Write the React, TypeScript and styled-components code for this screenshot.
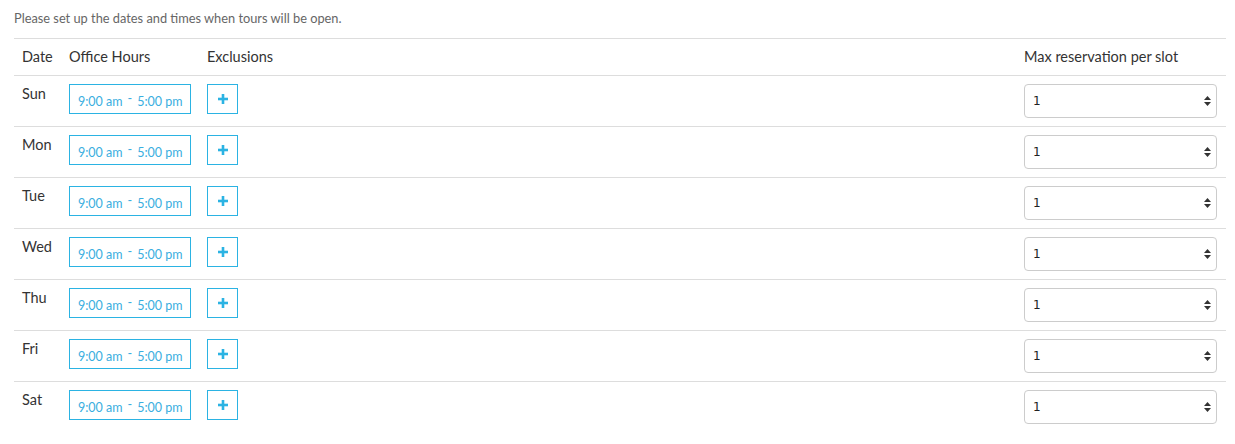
import React from "react";
import styled, { createGlobalStyle } from "styled-components";

const GlobalStyle = createGlobalStyle`
  body {
    margin: 0;
    background: #fff;
    font-family: "Lato", "Open Sans", sans-serif;
    color: #333;
  }
`;

const Page = styled.div`
  padding: 10px 9px 0 14px;
`;

const Intro = styled.p`
  margin: 0 0 12px;
  font-size: 12.8px;
  line-height: 16px;
  color: #666;
`;

const Table = styled.table`
  width: 100%;
  border-collapse: collapse;
  table-layout: fixed;
`;

const Head = styled.th<{ $w?: number }>`
  box-sizing: border-box;
  width: ${(p) => (p.$w ? `${p.$w}px` : "auto")};
  text-align: left;
  font-weight: 400;
  font-size: 14.5px;
  color: #333;
  padding: 8px 8px 8px;
  line-height: 20px;
  border-top: 1px solid #ddd;
`;

const Row = styled.tr`
  border-top: 1px solid #ddd;
  height: 51px;
`;

const Cell = styled.td`
  vertical-align: top;
  padding: 8px 8px 0;
  font-size: 14.5px;
  line-height: 20px;
`;

const DayLabel = styled.div`
  color: #333;
`;

const HoursBox = styled.div`
  box-sizing: border-box;
  width: 122px;
  height: 30px;
  border: 1px solid #2bb3e3;
  display: flex;
  align-items: flex-end;
  padding: 0 8px 3px;
  font-size: 12.5px;
  line-height: 16px;
  color: #3aaee0;
  white-space: nowrap;
`;

const Dash = styled.span`
  display: inline-block;
  margin: 0 5px;
  transform: translateY(-3px);
`;

const PlusButton = styled.button`
  box-sizing: border-box;
  width: 31px;
  height: 30px;
  border: 1px solid #2bb3e3;
  background: #fff;
  padding: 0;
  display: flex;
  align-items: center;
  justify-content: center;
  cursor: pointer;
`;

const SelectWrap = styled.div`
  position: relative;
  width: 193px;
`;

const Select = styled.select`
  box-sizing: border-box;
  width: 100%;
  height: 34px;
  appearance: none;
  -webkit-appearance: none;
  border: 1px solid #ccc;
  border-radius: 4px;
  background: #fff;
  padding: 0 8px;
  font-family: "DejaVu Sans", sans-serif;
  font-size: 12px;
  color: #222;
`;

const Arrows = styled.svg`
  position: absolute;
  right: 6px;
  top: 12px;
  pointer-events: none;
`;

const days = ["Sun", "Mon", "Tue", "Wed", "Thu", "Fri", "Sat"];

export default function App() {
  return (
    <>
      <GlobalStyle />
      <Page>
        <Intro>Please set up the dates and times when tours will be open.</Intro>
        <Table>
          <thead>
            <tr>
              <Head $w={47}>Date</Head>
              <Head $w={138}>Office Hours</Head>
              <Head>Exclusions</Head>
              <Head $w={210}>Max reservation per slot</Head>
            </tr>
          </thead>
          <tbody>
            {days.map((d) => (
              <Row key={d}>
                <Cell>
                  <DayLabel>{d}</DayLabel>
                </Cell>
                <Cell>
                  <HoursBox>
                    9:00 am<Dash>-</Dash>5:00 pm
                  </HoursBox>
                </Cell>
                <Cell>
                  <PlusButton aria-label="Add exclusion">
                    <svg width="10" height="10" viewBox="0 0 10 10">
                      <rect x="3.7" y="0" width="2.6" height="10" fill="#2bb3e3" />
                      <rect x="0" y="3.7" width="10" height="2.6" fill="#2bb3e3" />
                    </svg>
                  </PlusButton>
                </Cell>
                <Cell>
                  <SelectWrap>
                    <Select defaultValue="1">
                      {[1, 2, 3, 4, 5].map((n) => (
                        <option key={n} value={n}>
                          {n}
                        </option>
                      ))}
                    </Select>
                    <Arrows width="7" height="10" viewBox="0 0 7 10">
                      <path d="M3.5 0 L7 4 L0 4 Z" fill="#333" />
                      <path d="M0 6 L7 6 L3.5 10 Z" fill="#333" />
                    </Arrows>
                  </SelectWrap>
                </Cell>
              </Row>
            ))}
          </tbody>
        </Table>
      </Page>
    </>
  );
}
